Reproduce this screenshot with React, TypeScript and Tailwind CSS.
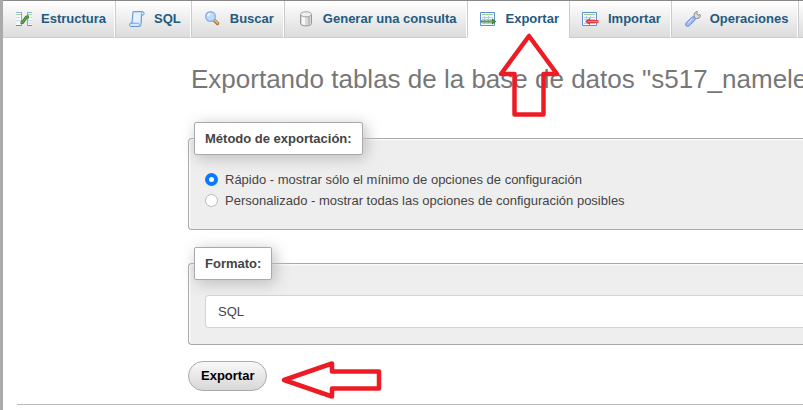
import { useState } from 'react'
import type { ReactNode } from 'react'

import { clsx } from 'clsx'

const StructureIcon = () => (
	<svg width="16" height="16" viewBox="0 0 16 16" aria-hidden="true">
		<path d="M0 1h5v13H0zM11 1h5v13h-5z" fill="#f5f9fe" />
		<path d="M0 3.500h5M11 3.500h5" stroke="#a8cf9f" />
		<path d="M0 1.500h5M11 1.500h5" stroke="#8db4e2" />
		<path d="M0 6.500h4M0 9.500h4M12 6.500h4M12 9.500h4M12 12h4" stroke="#c7daf1" />
		<path d="M0 14.500h6M11 14.500h5" stroke="#5b8fd0" />
		<path d="M5.500 1v14M11.500 1v14" stroke="#7ba6dc" />
		<path d="M4.500 11.500h2l4-5.500h2.500" fill="none" stroke="#3f8235" strokeWidth="3" strokeLinejoin="round" />
		<path d="M5 11.500h1.500l4-5.500h2" fill="none" stroke="#6bb552" />
	</svg>
)

const SqlIcon = () => (
	<svg width="16" height="16" viewBox="0 0 16 16" aria-hidden="true">
		<path d="M4 .6h9.500c2 0 2.200 3.400.4 3.600h-1.300L12 13.500c-.2 1.500-.8 2-2 2H1.800C.2 15.500.2 12 1.800 12H3z" fill="#d5e7fb" stroke="#5e95d6" />
		<path d="M5 2.500h6v9H4.500z" fill="#e3f0ff" />
		<path d="M2 12.300h7.500c1 0 .8 2.600 1.300 2.900M12.500 4.200V2.500c0-.8.300-1.400 1-1.600" fill="none" stroke="#78a8df" />
	</svg>
)

const SearchIcon = () => (
	<svg width="16" height="16" viewBox="0 0 16 16" aria-hidden="true">
		<path d="m9.500 9.500 3 3" stroke="#a9793f" strokeWidth="3.500" strokeLinecap="round" />
		<path d="m9.500 9 3.500 3.500" stroke="#ebbd7c" strokeWidth="1.500" />
		<circle cx="5.500" cy="5.500" r="4.800" fill="#bcdcff" stroke="#91ace6" strokeWidth="1.400" />
		<path d="M2.800 5.200c.3-1.500 1.200-2.300 2.700-2.400" fill="none" stroke="#f4faff" strokeWidth="1.400" />
	</svg>
)

const DatabaseIcon = () => (
	<svg width="16" height="16" viewBox="0 0 16 16" aria-hidden="true">
		<path d="M2.500 3v9.500c0 3.200 11 3.200 11 0V3" fill="#d8d8d8" stroke="#999" />
		<path d="M4 5v8c.8.7 2 .9 3 1V6z" fill="#f8f8f8" />
		<path d="M11 6v7.500" stroke="#bbb" strokeWidth="2" />
		<ellipse cx="8" cy="3.300" rx="5.500" ry="2.500" fill="#f0f0f0" stroke="#a5a5a5" />
	</svg>
)

const TableSheet = () => (
	<>
		<path d="M.5 1.500h14v13H.5z" fill="#f8fbff" stroke="#5d8fd2" />
		<path d="M2 3.500h11" stroke="#9ccb8e" />
		<path d="M2 6.500h11M2 8.500h11M2 12.500h11M4.500 5v8M8.500 5v8" stroke="#b2cbea" />
	</>
)

const ExportIcon = () => (
	<svg width="17" height="16" viewBox="0 0 17 16" aria-hidden="true">
		<TableSheet />
		<path d="M1 9.500h11V7.500l4.500 3L12 13.500v-2H1z" fill="#347b2d" />
		<path d="M2 10.500h13" stroke="#5fa54e" />
	</svg>
)

const ImportIcon = () => (
	<svg width="17" height="16" viewBox="0 0 17 16" aria-hidden="true">
		<TableSheet />
		<path d="M16.500 9H8V7l-5 3.500L8 14v-2h8.500z" fill="#e4393c" />
		<path d="M6 10.500h10" stroke="#ff8c8c" />
	</svg>
)

const WrenchIcon = () => (
	<svg width="16" height="16" viewBox="0 0 16 16" aria-hidden="true">
		<path d="m9 7 2-2" stroke="#999" strokeWidth="3" />
		<path d="M9 4.500 9.500 2l2-1.500 1 .2-.8 2L13 4.200l2-.7.5 1.300-1.300 2.200-2.700.7L9.500 7z" fill="#d9d9d9" stroke="#8d8d8d" />
		<path d="m2.700 13.200 5.300-5.300" stroke="#6c91dd" strokeWidth="5" strokeLinecap="round" />
		<path d="m2.700 13.200 5.300-5.300" stroke="#a5c3f7" strokeWidth="3" strokeLinecap="round" />
		<path d="m3 12 4-4" stroke="#d6e5ff" />
	</svg>
)

const tabs: { label: string; icon: ReactNode }[] = [
	{ label: 'Estructura', icon: <StructureIcon /> },
	{ label: 'SQL', icon: <SqlIcon /> },
	{ label: 'Buscar', icon: <SearchIcon /> },
	{ label: 'Generar una consulta', icon: <DatabaseIcon /> },
	{ label: 'Exportar', icon: <ExportIcon /> },
	{ label: 'Importar', icon: <ImportIcon /> },
	{ label: 'Operaciones', icon: <WrenchIcon /> },
]

const methods = [
	{ value: 'quick', label: 'Rápido - mostrar sólo el mínimo de opciones de configuración' },
	{ value: 'custom', label: 'Personalizado - mostrar todas las opciones de configuración posibles' },
]

const panelClass =
	'rounded-l border border-r-0 border-[#aaa] bg-[#eee] px-4 shadow-[inset_1px_1px_2px_#fff]'
const legendClass =
	'-ml-[11px] rounded-xs border border-[#aaa] bg-white px-2.5 py-1.5 font-bold leading-[19px] shadow-[3px_3px_15px_#bbb]'

export default function App() {
	const [method, setMethod] = useState('quick')

	return (
		<div className="relative min-h-screen overflow-hidden border-l-3 border-[#aaa] bg-white font-['Liberation_Sans',Arial,sans-serif] text-[13px] text-[#444]">
			<nav className="flex border-t border-[#888]">
				{tabs.map(({ label, icon }) => (
					<a
						key={label}
						href="#"
						className={clsx(
							'flex h-[37px] shrink-0 items-center gap-2 border-r border-b border-l border-r-white border-l-[#ccc] pr-[9px] pl-3 font-bold text-[#235a81] first:border-l-0 first:pr-2',
							label === 'Exportar'
								? 'border-b-white bg-white'
								: 'border-b-[#ccc] bg-linear-to-b from-white to-[#dcdcdc]'
						)}>
						<span className="flex w-[18px] justify-center">{icon}</span>
						{label}
					</a>
				))}
				<div className="h-[37px] flex-1 border-b border-l border-[#ccc] bg-linear-to-b from-white to-[#dcdcdc]" />
			</nav>

			<main className="pl-[185px]">
				<h1 className="mt-6 ml-[3px] text-[26px] leading-[34px] whitespace-nowrap text-[#777]">
					Exportando tablas de la base de datos "s517_namele
				</h1>

				<fieldset className={clsx(panelClass, 'mt-[26px] pt-3.5 pb-[18px]')}>
					<legend className={legendClass}>Método de exportación:</legend>
					{methods.map(({ value, label }) => (
						<label key={value} className="flex h-[21px] items-center gap-[7px] whitespace-nowrap">
							<input
								type="radio"
								name="method"
								value={value}
								checked={method === value}
								onChange={() => setMethod(value)}
								className="size-[13px] appearance-none rounded-full border border-[#b8b8b8] bg-white checked:border-4 checked:border-[#0a78ff]"
							/>
							{label}
						</label>
					))}
				</fieldset>

				<fieldset className={clsx(panelClass, 'mt-[17px] pt-[15px] pr-0 pb-4')}>
					<legend className={legendClass}>Formato:</legend>
					<select
						aria-label="Formato"
						className="block h-[33px] w-full appearance-none rounded-l border border-r-0 border-[#ced4da] bg-white px-3 text-[#444]">
						<option>SQL</option>
					</select>
				</fieldset>

				<button
					type="button"
					className="mt-4 block h-[30px] rounded-full border border-[#aaa] bg-linear-to-b from-[#f8f8f8] to-[#d8d8d8] px-3 font-bold text-black">
					Exportar
				</button>
			</main>

			<hr className="mt-[13px] ml-3.5 border-[#bbb]" />

			<svg
				className="pointer-events-none absolute top-8 left-[492px]"
				width="68"
				height="88"
				viewBox="0 0 68 88"
				aria-hidden="true">
				<path d="M34 4 6 42h13.500v40.500h29V42H62z" fill="none" stroke="#ed1c24" strokeWidth="4.500" strokeLinejoin="round" />
			</svg>
			<svg
				className="pointer-events-none absolute top-[359px] left-[274px]"
				width="106"
				height="42"
				viewBox="0 0 106 42"
				aria-hidden="true">
				<path d="M7 21 55 4.500v8h47v17H55v8z" fill="none" stroke="#ed1c24" strokeWidth="4.500" strokeLinejoin="round" />
			</svg>
		</div>
	)
}
